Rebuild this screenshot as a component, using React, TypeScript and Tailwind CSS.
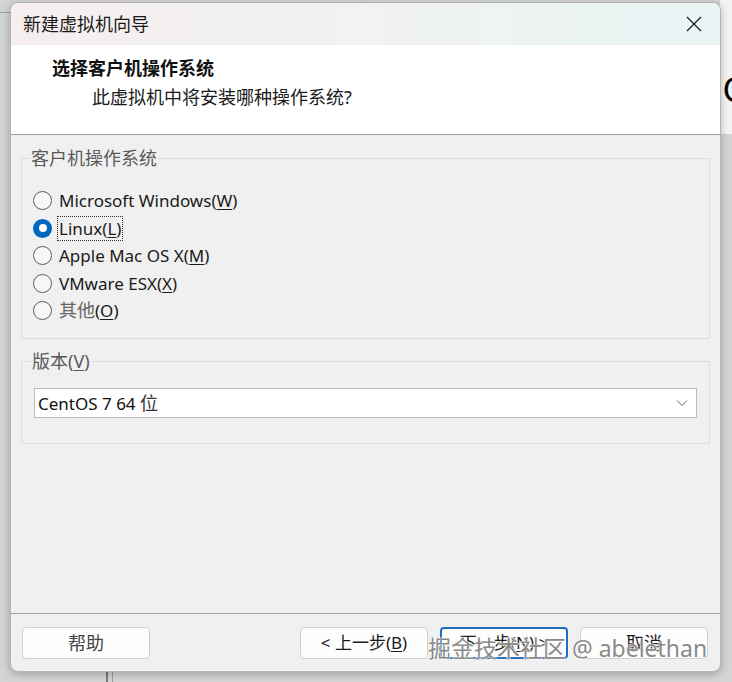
import React from 'react';

const font = { fontFamily: '"Noto Sans", "Noto Sans CJK SC", sans-serif' };

const options = [
  { label: 'Microsoft Windows', key: 'W' },
  { label: 'Linux', key: 'L' },
  { label: 'Apple Mac OS X', key: 'M' },
  { label: 'VMware ESX', key: 'X' },
  { label: '其他', key: 'O' },
];

const Radio: React.FC<{ checked?: boolean }> = ({ checked }) =>
  checked ? (
    <span className="flex h-[19px] w-[19px] shrink-0 items-center justify-center rounded-full bg-[#0067c0]">
      <span className="h-[8px] w-[8px] rounded-full bg-white" />
    </span>
  ) : (
    <span className="h-[19px] w-[19px] shrink-0 rounded-full border border-[#5c5c5c] bg-[#f7f7f7]" />
  );

const Button: React.FC<{ children: React.ReactNode; primary?: boolean; className?: string }> = ({ children, primary, className }) => (
  <button
    type="button"
    className={`flex h-[32px] w-[128px] items-center justify-center rounded-[4px] text-[17px] text-[#1b1b1b] ${
      primary ? 'border-2 border-[#1f6fc2] bg-[#fdfdfd]' : 'border border-[#d0d0d0] bg-[#fdfdfd]'
    } ${className ?? ''}`}
  >
    {children}
  </button>
);

export default function App() {
  return (
    <div className="relative h-[682px] w-[732px] overflow-hidden bg-[#d4d4d4]" style={font}>
      {/* desktop bits behind the dialog */}
      <div className="absolute left-0 top-[12px] h-[1px] w-[10px] bg-[#9a9a9a]" />
      <div className="absolute right-0 top-0 h-[134px] w-[12px] bg-[#f4f4f4]" />
      <div className="absolute right-[-12px] top-[72px] text-[34px] leading-none text-black">C</div>
      <div className="absolute left-[106px] top-[672px] h-[10px] w-[2px] bg-[#777]" />
      <div className="absolute left-[112px] top-[672px] h-[10px] w-[1px] bg-[#999]" />

      <div className="absolute left-[10px] top-[2px] flex h-[670px] w-[711px] flex-col overflow-hidden rounded-[8px] border border-[#b5b5b5] bg-[#f0f0f0] shadow-[0_2px_8px_rgba(0,0,0,0.25)]">
        {/* title bar */}
        <div className="flex h-[42px] shrink-0 items-center justify-between bg-gradient-to-r from-[#f6eeee] via-[#f1f2f2] to-[#e9f4f4] pl-[12px] pr-[16px]">
          <span className="text-[18px] text-[#1a1a1a]">新建虚拟机向导</span>
          <svg width="16" height="16" viewBox="0 0 16 16" className="mr-[2px]">
            <path d="M1 1 L15 15 M15 1 L1 15" stroke="#1a1a1a" strokeWidth="1.2" fill="none" />
          </svg>
        </div>

        {/* header */}
        <div className="flex h-[90px] shrink-0 flex-col border-b border-[#a0a0a0] bg-white pl-[41px] pt-[9px]">
          <span className="text-[18px] font-bold leading-[28px] text-[#111]">选择客户机操作系统</span>
          <span className="pl-[40px] text-[18px] leading-[30px] text-[#1a1a1a]">此虚拟机中将安装哪种操作系统?</span>
        </div>

        {/* body */}
        <div className="flex flex-1 flex-col px-[10px] pt-[12px]">
          <fieldset className="h-[192px] rounded-[2px] border border-[#dcdcdc] pb-0 pl-[11px] pr-0 pt-[18px]">
            <legend className="ml-[-3px] px-[1px] text-[18px] leading-[22px] text-[#5a5a5a]">客户机操作系统</legend>
            <div className="flex flex-col">
              {options.map((o, i) => (
                <label key={o.key} className="flex h-[27.5px] items-center gap-[6px] text-[17px] text-[#1a1a1a]">
                  <Radio checked={i === 1} />
                  <span
                    className={`px-[1px] leading-[23px] ${i === 1 ? 'outline outline-1 outline-dotted outline-[#333]' : ''}`}
                  >
                    {i === 4 ? <span className="text-[18px] text-[#666]">{o.label}</span> : o.label}(
                    <span className="underline underline-offset-2">{o.key}</span>)
                  </span>
                </label>
              ))}
            </div>
          </fieldset>

          <fieldset className="mt-[11px] h-[94px] rounded-[2px] border border-[#dcdcdc] px-[12px] pt-[16px]">
            <legend className="ml-[-3px] px-[1px] text-[18px] leading-[22px] text-[#5a5a5a]">
              版本(<span className="underline underline-offset-2">V</span>)
            </legend>
            <div className="flex h-[30px] items-center justify-between border border-[#bdbdbd] bg-white pl-[3px] pr-[8px] text-[17px] text-[#111]">
              <span>
                CentOS 7 64 <span className="text-[18px] text-[#333]">位</span>
              </span>
              <svg width="12" height="8" viewBox="0 0 12 8">
                <path d="M1 1.5 L6 6.5 L11 1.5" stroke="#666" strokeWidth="1" fill="none" />
              </svg>
            </div>
          </fieldset>
        </div>

        {/* footer */}
        <div className="flex h-[58px] shrink-0 items-start border-t border-[#a0a0a0] pl-[11px] pr-[12px] pt-[13px]">
          <Button>
            <span className="text-[18px] text-[#444]">帮助</span>
          </Button>
          <div className="flex-1" />
          <Button>
            &lt; 上一步(<span className="underline underline-offset-2">B</span>)
          </Button>
          <Button primary className="ml-[12px]">
            下一步(<span className="underline underline-offset-2">N</span>) &gt;
          </Button>
          <Button className="ml-[12px]">
            <span className="text-[18px]">取消</span>
          </Button>
        </div>
      </div>

      {/* watermark */}
      <div
        className="absolute left-[428px] top-[631px] text-[23px] leading-[34px] text-[#8a8a8a]"
        style={{ textShadow: '0 0 2px #fff, 0 0 2px #fff, 0 0 1px #fff' }}
      >
        掘金技术社区 @ abelethan
      </div>
    </div>
  );
}
